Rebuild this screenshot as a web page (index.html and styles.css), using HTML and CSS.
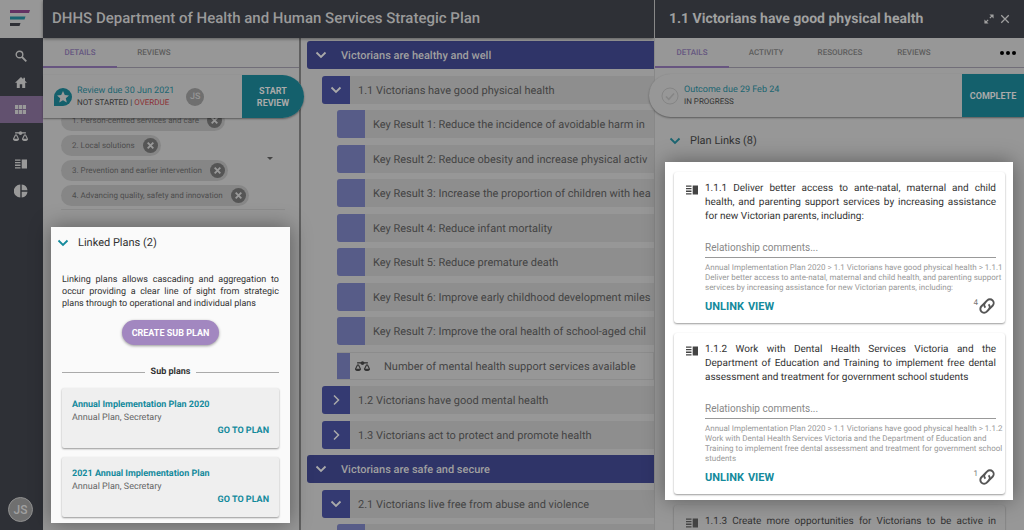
FILE: index.html
```html
<!DOCTYPE html>
<html lang="en">
<head>
  <meta charset="UTF-8" />
  <meta name="viewport" content="width=device-width, initial-scale=1.0"/>
  <title>DHHS Strategic Plan</title>
  <link rel="stylesheet" href="styles.css">
</head>
<body>

  <!-- Shared icons -->
  <svg class="sprite" aria-hidden="true">
    <symbol id="down" viewBox="0 0 12 12"><path d="M1.5 3.5 6 8l4.500-4.500" fill="none" stroke="currentColor" stroke-width="1.800"/></symbol>
    <symbol id="right" viewBox="0 0 12 12"><path d="M4 1.500 8.500 6 4 10.500" fill="none" stroke="currentColor" stroke-width="1.500"/></symbol>
    <symbol id="cross" viewBox="0 0 12 12"><path d="M1.500 1.500l9 9M10.500 1.500l-9 9" fill="none" stroke="currentColor" stroke-width="1.500"/></symbol>
    <symbol id="chip-x" viewBox="0 0 16 16"><circle cx="8" cy="8" r="8" fill="#555"/><path d="M5 5l6 6M11 5l-6 6" fill="none" stroke="#999" stroke-width="2"/></symbol>
    <symbol id="scales" viewBox="0 0 640 448"><path fill="currentColor" d="M256 336c0-16-1-9-85-181.500-17.600-35.300-68.200-35.400-85.900 0C-2 328.700 0 320.300 0 336c0 44.200 57.300 80 128 80s128-35.800 128-80zM128 166l76 154H52zM640 336c0-16-1-9-85-181.500-17.600-35.300-68.200-35.400-85.900 0C382 328.700 384 320.300 384 336c0 44.200 57.300 80 128 80s128-35.800 128-80zM436 320l76-154 76 154z" fill-rule="evenodd"/><path fill="currentColor" d="M90 40h460v56H90z"/><circle cx="320" cy="80" r="76" fill="currentColor"/></symbol>
    <symbol id="plan" viewBox="0 0 12 10"><path d="M0 .5h5.500v1.300H0zM0 3h5.500v1.300H0zM0 5.600h5.500v1.300H0zM0 8.200h5.500v1.300H0zM6.700.5H12v9H6.700z" fill="currentColor"/></symbol>
    <symbol id="link" viewBox="0 0 24 24"><g transform="rotate(-45 12 12)" fill="none" stroke="currentColor" stroke-width="2.600"><path d="M13 7H6.500a5 5 0 0 0 0 10H10a5 5 0 0 0 5-5"/><path d="M11 17h6.500a5 5 0 0 0 0-10H14a5 5 0 0 0-5 5"/></g></symbol>
  </svg>

  <nav class="sidebar">
    <a class="logo" href="#" aria-label="Dashboard">
      <svg viewBox="0 0 20 16" width="20" height="16"><path d="M0 0h20l-1 3H0z" fill="#633263"/><path d="M0 6.500h15.500l-1 3H0z" fill="#1b6571"/><path d="M0 13h10.500l-1 3H0z" fill="#2e3036"/></svg>
    </a>
    <a class="nav-item" href="#" aria-label="Search">
      <svg viewBox="0 0 12 12" width="12" height="12"><circle cx="4.500" cy="4.500" r="3.300" fill="none" stroke="currentColor" stroke-width="1.400"/><path d="M7 7l4.300 4.300" stroke="currentColor" stroke-width="1.800"/></svg>
    </a>
    <a class="nav-item" href="#" aria-label="Home">
      <svg viewBox="0 0 12 11" width="12" height="11"><path d="M6 0 0 5.700h1.800V11h3V7.300h2.400V11h3V5.700H12L10 3.800V.8H8.300v1.400z" fill="currentColor"/></svg>
    </a>
    <a class="nav-item active" href="#" aria-label="Plans">
      <svg viewBox="0 0 11 9" width="11" height="9"><path d="M0 0h3.200v4H0zM3.900 0h3.200v4H3.900zM7.800 0H11v4H7.800zM0 5h3.200v4H0zM3.900 5h3.200v4H3.900zM7.800 5H11v4H7.800z" fill="currentColor"/></svg>
    </a>
    <a class="nav-item" href="#" aria-label="Measures"><svg width="15" height="11"><use href="#scales"/></svg></a>
    <a class="nav-item" href="#" aria-label="Reports"><svg width="12" height="10"><use href="#plan"/></svg></a>
    <a class="nav-item" href="#" aria-label="Charts">
      <svg viewBox="0 0 14 14" width="14" height="14"><path d="M6.300.5v13A6.500 6.500 0 0 1 6.300.5zM7.700.5a6.500 6.500 0 0 1 5.800 5.800H7.700zM7.700 7.700h5.800a6.500 6.500 0 0 1-5.800 5.800z" fill="currentColor"/></svg>
    </a>
    <button class="avatar user">JS</button>
  </nav>

  <div class="workspace">
    <header class="page-header"><h1>DHHS Department of Health and Human Services Strategic Plan</h1></header>

    <div class="columns">
      <aside class="details">
        <nav class="tabs">
          <a class="tab active" href="#">DETAILS</a>
          <a class="tab" href="#">REVIEWS</a>
        </nav>

        <div class="review-bar">
          <svg class="badge" viewBox="0 0 18 18" width="18" height="18"><path d="M9 0a9 9 0 1 1 0 18H0V9a9 9 0 0 1 9-9z" fill="#14606c"/><path d="M9 3l1.800 4 4.200.4-3.200 2.900 1 4.200L9 12.300l-3.800 2.200 1-4.200L3 7.400 7.200 7z" fill="#999"/></svg>
          <div class="status">
            <span class="due">Review due 30 Jun 2021</span>
            <span>NOT STARTED | <span class="overdue">OVERDUE</span></span>
          </div>
          <span class="avatar small">JS</span>
          <button class="action start">START REVIEW</button>
        </div>

        <div class="chips">
          <ul>
            <li class="chip">1. Person-centred services and care <button aria-label="Remove"><svg><use href="#chip-x"/></svg></button></li>
            <li class="chip">2. Local solutions <button aria-label="Remove"><svg><use href="#chip-x"/></svg></button></li>
            <li class="chip">3. Prevention and earlier intervention <button aria-label="Remove"><svg><use href="#chip-x"/></svg></button></li>
            <li class="chip">4. Advancing quality, safety and innovation <button aria-label="Remove"><svg><use href="#chip-x"/></svg></button></li>
          </ul>
          <span class="caret"></span>
        </div>

        <section class="spotlight linked">
          <h2 class="section-title"><svg><use href="#down"/></svg>Linked Plans (2)</h2>
          <p class="intro">Linking plans allows cascading and aggregation to occur providing a clear line of sight from strategic plans through to operational and individual plans</p>
          <button class="create">CREATE SUB PLAN</button>
          <h3 class="divider">Sub plans</h3>
          <article class="sub-plan">
            <h4>Annual Implementation Plan 2020</h4>
            <p>Annual Plan, Secretary</p>
            <a href="#">GO TO PLAN</a>
          </article>
          <article class="sub-plan">
            <h4>2021 Annual Implementation Plan</h4>
            <p>Annual Plan, Secretary</p>
            <a href="#">GO TO PLAN</a>
          </article>
        </section>
      </aside>

      <main class="tree-wrap">
        <ul class="tree">
          <li class="row theme"><button class="toggle" aria-label="Collapse"><svg><use href="#down"/></svg></button><span>Victorians are healthy and well</span></li>
          <li class="row outcome"><button class="toggle" aria-label="Collapse"><svg><use href="#down"/></svg></button><span>1.1 Victorians have good physical health</span></li>
          <li class="row result"><i class="marker"></i><span>Key Result 1: Reduce the incidence of avoidable harm in</span></li>
          <li class="row result"><i class="marker"></i><span>Key Result 2: Reduce obesity and increase physical activ</span></li>
          <li class="row result"><i class="marker"></i><span>Key Result 3: Increase the proportion of children with hea</span></li>
          <li class="row result"><i class="marker"></i><span>Key Result 4: Reduce infant mortality</span></li>
          <li class="row result"><i class="marker"></i><span>Key Result 5: Reduce premature death</span></li>
          <li class="row result"><i class="marker"></i><span>Key Result 6: Improve early childhood development miles</span></li>
          <li class="row result"><i class="marker"></i><span>Key Result 7: Improve the oral health of school-aged chil</span></li>
          <li class="row measure"><i class="marker"></i><svg><use href="#scales"/></svg><span>Number of mental health support services available</span></li>
          <li class="row outcome"><button class="toggle" aria-label="Expand"><svg><use href="#right"/></svg></button><span>1.2 Victorians have good mental health</span></li>
          <li class="row outcome"><button class="toggle" aria-label="Expand"><svg><use href="#right"/></svg></button><span>1.3 Victorians act to protect and promote health</span></li>
          <li class="row theme"><button class="toggle" aria-label="Collapse"><svg><use href="#down"/></svg></button><span>Victorians are safe and secure</span></li>
          <li class="row outcome"><button class="toggle" aria-label="Collapse"><svg><use href="#down"/></svg></button><span>2.1 Victorians live free from abuse and violence</span></li>
          <li class="row result"><i class="marker"></i></li>
        </ul>
      </main>
    </div>
  </div>

  <aside class="drawer">
    <header class="drawer-header">
      <h2>1.1 Victorians have good physical health</h2>
      <button aria-label="Expand"><svg viewBox="0 0 12 12" width="10" height="10"><path d="M2 10l3-3M7 5l3-3" stroke="currentColor" stroke-width="1.500"/><path d="M6.500.5h5v5zM.5 6.500v5h5z" fill="currentColor"/></svg></button>
      <button aria-label="Close"><svg width="10" height="10"><use href="#cross"/></svg></button>
    </header>
    <nav class="tabs">
      <a class="tab active" href="#">DETAILS</a>
      <a class="tab" href="#">ACTIVITY</a>
      <a class="tab" href="#">RESOURCES</a>
      <a class="tab" href="#">REVIEWS</a>
      <button class="more" aria-label="More"><svg viewBox="0 0 16 4" width="16" height="4"><circle cx="2" cy="2" r="2"/><circle cx="8" cy="2" r="2"/><circle cx="14" cy="2" r="2"/></svg></button>
    </nav>

    <div class="outcome-bar">
      <svg viewBox="0 0 18 18" width="18" height="18"><g fill="none" stroke="#858585"><circle cx="9" cy="9" r="8"/><path d="M5 9.500l2.800 2.800L13 6.500" stroke-width="1.500"/></g></svg>
      <div class="status">
        <span class="due">Outcome due 29 Feb 24</span>
        <span>IN PROGRESS</span>
      </div>
      <button class="action">COMPLETE</button>
    </div>

    <h3 class="section-title"><svg><use href="#down"/></svg>Plan Links (8)</h3>

    <section class="spotlight links">
      <article class="link-card">
        <svg class="plan-icon"><use href="#plan"/></svg>
        <div class="link-body">
          <h4>1.1.1 Deliver better access to ante-natal, maternal and child health, and parenting support services by increasing assistance for new Victorian parents, including:</h4>
          <input type="text" aria-label="Relationship comments" placeholder="Relationship comments..." />
          <p class="path">Annual Implementation Plan 2020 &gt; 1.1 Victorians have good physical health &gt; 1.1.1 Deliver better access to ante-natal, maternal and child health, and parenting support services by increasing assistance for new Victorian parents, including:</p>
          <div class="link-actions">
            <button>UNLINK</button>
            <button>VIEW</button>
            <span class="count">4</span>
            <svg><use href="#link"/></svg>
          </div>
        </div>
      </article>
      <article class="link-card">
        <svg class="plan-icon"><use href="#plan"/></svg>
        <div class="link-body">
          <h4>1.1.2 Work with Dental Health Services Victoria and the Department of Education and Training to implement free dental assessment and treatment for government school students</h4>
          <input type="text" aria-label="Relationship comments" placeholder="Relationship comments..." />
          <p class="path">Annual Implementation Plan 2020 &gt; 1.1 Victorians have good physical health &gt; 1.1.2 Work with Dental Health Services Victoria and the Department of Education and Training to implement free dental assessment and treatment for government school students</p>
          <div class="link-actions">
            <button>UNLINK</button>
            <button>VIEW</button>
            <span class="count">1</span>
            <svg><use href="#link"/></svg>
          </div>
        </div>
      </article>
    </section>

    <article class="link-card dimmed">
      <svg class="plan-icon"><use href="#plan"/></svg>
      <div class="link-body">
        <h4>1.1.3 Create more opportunities for Victorians to be active in</h4>
      </div>
    </article>
  </aside>

</body>
</html>
```
FILE: styles.css
```css
* {
  box-sizing: border-box;
  margin: 0;
  padding: 0;
}

body {
  display: flex;
  height: 100vh;
  overflow: hidden;
  background: #979797;
  color: #333;
  font-family: Roboto, "Liberation Sans", sans-serif;
  font-size: 9px;
  text-rendering: geometricPrecision;
}

button {
  border: none;
  background: none;
  color: inherit;
  font: inherit;
  cursor: pointer;
}

a {
  text-decoration: none;
  color: inherit;
}

ul {
  list-style: none;
}

svg {
  flex: none;
  display: block;
}

.sprite {
  position: absolute;
  width: 0;
  height: 0;
}

/* Sidebar */
.sidebar {
  flex: none;
  width: 43px;
  display: flex;
  flex-direction: column;
  background: #2e3036;
  color: #999;
}

.logo {
  height: 38px;
  padding: 10px;
  background: #979797;
  margin-bottom: 4px;
}

.nav-item {
  height: 27px;
  display: flex;
  align-items: center;
  justify-content: center;
  padding-right: 2px;
}

.nav-item.active {
  background: #62516f;
}

.avatar {
  display: flex;
  align-items: center;
  justify-content: center;
  border-radius: 50%;
  background: #6f6f6f;
  color: #969696;
  font-weight: 500;
}

.user {
  width: 25px;
  height: 25px;
  margin: auto 0 8px 8px;
  border: 1px solid #909090;
  color: #a0a0a0;
  font-size: 12px;
}

.small {
  width: 18px;
  height: 18px;
  margin-left: 12px;
}

/* Main area */
.workspace {
  flex: 1;
  min-width: 0;
  display: flex;
  flex-direction: column;
}

.page-header {
  height: 38px;
  padding: 0 9px;
  background: #2e3036;
  box-shadow: 0 1px 3px rgba(0, 0, 0, 0.4);
  color: #9a9a9a;
  z-index: 2;
}

.page-header h1 {
  font-size: 15px;
  font-weight: 500;
  line-height: 36px;
  white-space: nowrap;
}

.columns {
  flex: 1;
  min-height: 0;
  display: flex;
}

.details {
  flex: none;
  width: 25vw;
  position: relative;
  z-index: 1;
}

.tabs {
  display: flex;
  height: 30px;
  border-bottom: 1px solid #716e78;
}

.tab {
  width: 74px;
  height: 30px;
  color: #5c5c5c;
  font-size: 8px;
  font-weight: 500;
  line-height: 30px;
  text-align: center;
}

.tab.active {
  border-bottom: 2px solid #675580;
  color: #655680;
}

.review-bar,
.outcome-bar {
  position: relative;
  display: flex;
  align-items: center;
  height: 43px;
  background: #979797;
  box-shadow: 0 1px 2px rgba(0, 0, 0, 0.4);
}

.review-bar {
  margin: 7px -5px 0 0;
  padding-left: 11px;
  border-radius: 0 22px 22px 0;
}

.badge {
  margin-right: 5px;
}

.status {
  display: flex;
  flex-direction: column;
  line-height: 12px;
  font-size: 8px;
}

.due {
  color: #1b6571;
  font-size: 9px;
}

.overdue {
  color: #8c3034;
}

.action {
  align-self: stretch;
  width: 62px;
  margin-left: auto;
  background: #14606c;
  color: #aaa;
  font-weight: 700;
  line-height: 12px;
}

.start {
  padding: 0 12px;
  border-radius: 0 22px 22px 0;
}

.chips {
  display: flex;
  align-items: center;
  justify-content: space-between;
  margin: -8px 14px 0 18px;
  padding: 0 12px 3px 0;
  border-bottom: 1px solid #8c8c8c;
}

.chip {
  display: flex;
  align-items: center;
  gap: 8px;
  width: max-content;
  height: 21px;
  margin-bottom: 4px;
  padding: 0 3px 0 11px;
  border-radius: 11px;
  background: #868686;
  color: #4d4d4d;
  font-size: 8px;
}

.chip:last-child {
  margin-bottom: 0;
}

.chip svg {
  width: 15px;
  height: 15px;
}

.caret {
  border: 3px solid transparent;
  border-top-color: #444;
  border-bottom: 0;
}

.spotlight {
  background: #fff;
  box-shadow: 0 0 20px rgba(0, 0, 0, 0.4);
}

.section-title {
  display: flex;
  align-items: center;
  gap: 9px;
  font-size: 11px;
  font-weight: 400;
  line-height: 14px;
}

.section-title svg {
  width: 12px;
  height: 12px;
  color: #148a9c;
}

.linked {
  margin: 17px 9px 0 8px;
  padding: 9px 11px 6px;
  background: #fafafa;
}

.linked .section-title {
  margin-left: -5px;
}

.intro {
  margin: 24px 0 10px;
  line-height: 12px;
  text-align: justify;
}

.create {
  display: block;
  height: 25px;
  margin: 0 auto;
  padding: 0 10px;
  border-radius: 13px;
  background: #a287c0;
  box-shadow: 0 1px 3px rgba(0, 0, 0, 0.4);
  color: #fff;
  font-weight: 700;
}

.divider {
  display: flex;
  align-items: center;
  gap: 6px;
  margin: 21px 0 10px;
  font-size: 9px;
  font-weight: 700;
  line-height: 12px;
}

.divider::before,
.divider::after {
  content: "";
  flex: 1;
  border-top: 1px solid #aaa;
}

.sub-plan {
  height: 60px;
  margin-bottom: 9px;
  padding: 11px 10px;
  border-radius: 2px;
  background: #efefef;
  box-shadow: 0 1px 2px rgba(0, 0, 0, 0.4);
  color: #666;
  line-height: 13px;
}

.sub-plan:last-child {
  margin-bottom: 0;
}

.sub-plan h4,
.sub-plan a {
  color: #148a9c;
  font-size: 9px;
  font-weight: 700;
}

.sub-plan a {
  display: block;
  text-align: right;
}

/* Plan tree */
.tree-wrap {
  flex: 1;
  min-width: 0;
  overflow: hidden;
  border-left: 2px solid #606060;
  padding: 3px 0 0 6px;
}

.row {
  display: flex;
  align-items: center;
  height: 28px;
  margin-bottom: 7px;
  border-radius: 3px 0 0 3px;
  background: #8e8e8e;
  color: #444;
  font-size: 11px;
  white-space: nowrap;
  overflow: hidden;
}

.row:nth-child(even) {
  margin-bottom: 6px;
}

.toggle,
.marker {
  flex: none;
  width: 28px;
  height: 28px;
  margin-right: 8px;
}

.toggle {
  display: flex;
  align-items: center;
  justify-content: center;
  background: #343a72;
  color: #aaa;
}

.toggle svg {
  width: 12px;
  height: 12px;
}

.marker {
  background: #575c88;
}

.theme {
  background: #2f3468;
  color: #a0a0a0;
  font-weight: 500;
}

.theme .toggle {
  margin-right: 6px;
  background: none;
}

.outcome {
  margin-left: 15px;
}

.result,
.measure {
  margin-left: 30px;
}

.measure {
  border-radius: 0;
  background: #979797;
  border: 1px solid #8c8c8c;
  border-left: 0;
}

.measure .marker {
  width: 13px;
  margin-right: 5px;
}

.measure svg {
  width: 15px;
  height: 11px;
  margin-right: 14px;
  color: #333;
}

/* Outcome drawer */
.drawer {
  flex: none;
  width: 370px;
  position: relative;
  z-index: 3;
  background: #979797;
  border-left: 1px solid #888;
}

.drawer-header {
  display: flex;
  align-items: center;
  gap: 6px;
  height: 38px;
  padding: 0 14px;
  background: #2e3036;
  color: #a0a0a0;
}

.drawer-header h2 {
  flex: 1;
  font-size: 14px;
  font-weight: 700;
  white-space: nowrap;
}

.more {
  margin: 0 8px 0 auto;
  color: #222;
}

.outcome-bar {
  margin: 6px 0 0 -6px;
  padding-left: 12px;
  border-radius: 22px 0 0 22px;
}

.outcome-bar .status {
  margin-left: 5px;
}

.drawer > .section-title {
  margin: 17px 0 14px 14px;
}

.drawer > .section-title svg {
  color: #1b6571;
}

.links {
  position: relative;
  margin: 0 11px 0 10px;
  padding: 10px 8px 6px 9px;
}

.link-card {
  display: flex;
  gap: 7px;
  margin-bottom: 10px;
  padding: 10px 9px 9px 12px;
  border-radius: 3px;
  box-shadow: 0 1px 2px rgba(0, 0, 0, 0.4);
}

.link-card:last-child {
  margin-bottom: 0;
}

.plan-icon {
  width: 12px;
  height: 10px;
  margin-top: 3px;
  color: #444;
}

.link-body {
  flex: 1;
  min-width: 0;
}

.link-body h4 {
  font-size: 10px;
  font-weight: 400;
  line-height: 14px;
  text-align: justify;
}

.link-body input {
  display: block;
  width: 100%;
  height: 20px;
  margin: 14px 0 5px;
  border: none;
  border-bottom: 1px solid #999;
  background: none;
  font: inherit;
  font-size: 10px;
}

.link-body input::placeholder {
  color: #888;
}

.path {
  margin-right: -8px;
  color: #999;
  font-size: 8px;
  line-height: 10px;
}

.link-actions {
  display: flex;
  align-items: center;
  gap: 4px;
  height: 16px;
  margin-top: 5px;
  color: #148a9c;
  font-size: 11px;
  font-weight: 700;
}

.count {
  align-self: flex-start;
  margin: 0 -4px 0 auto;
  color: #777;
  font-size: 8px;
  font-weight: 400;
}

.link-actions svg {
  width: 18px;
  height: 18px;
  color: #555;
}

.dimmed {
  margin: 5px 19px 0;
}

.dimmed h4 {
  text-align-last: justify;
}
```
